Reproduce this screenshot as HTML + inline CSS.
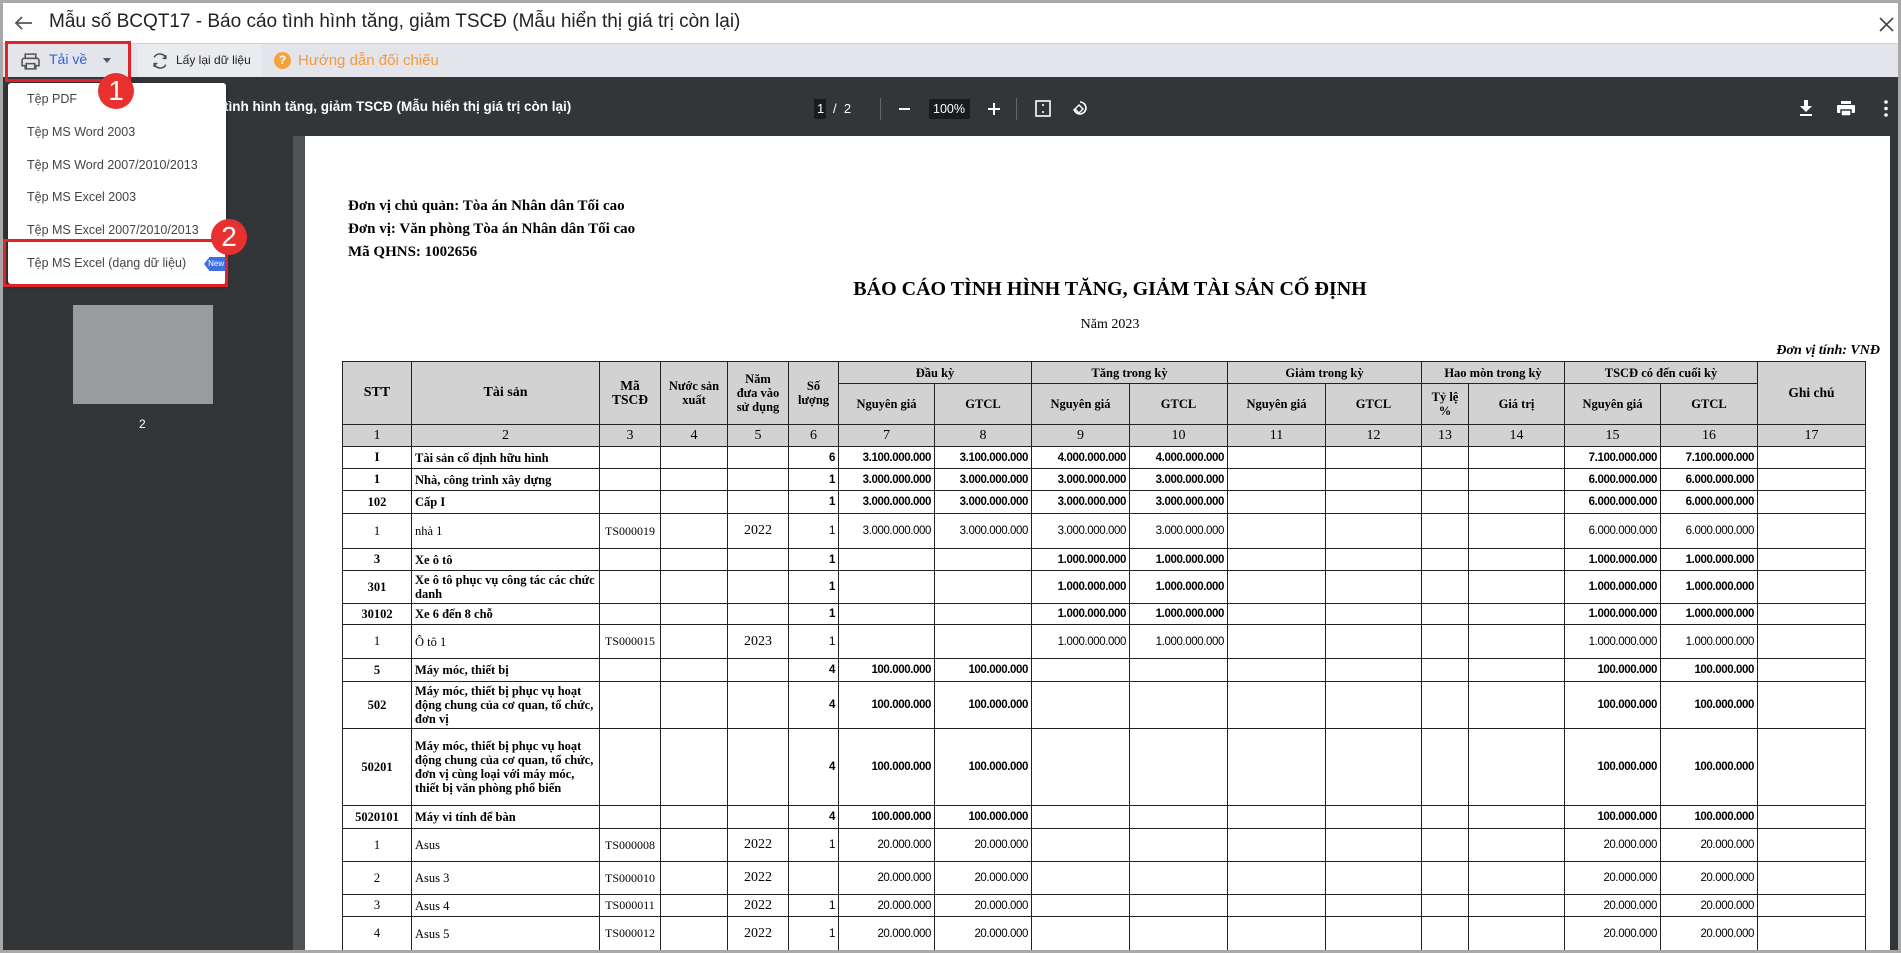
<!DOCTYPE html>
<html><head><meta charset="utf-8">
<style>
*{margin:0;padding:0;box-sizing:border-box}
body{width:1901px;height:953px;overflow:hidden;background:#a8a8a8;font-family:"Liberation Sans",sans-serif;position:relative}
.win{position:absolute;left:3px;top:3px;width:1895px;height:947px;background:#fff;overflow:hidden}
.title{position:absolute;left:0;top:0;width:100%;height:41px;background:#fff;border-bottom:1px solid #d4d4d8}
.title .t{position:absolute;left:46px;top:8px;font-size:19px;color:#222}
.tb{position:absolute;left:0;top:41px;width:100%;height:33px;background:#e4e5ea}
.dark{position:absolute;left:0;top:74px;width:100%;height:873px;background:#323639}
.side{position:absolute;left:0;top:133px;width:290px;height:820px;background:#323639}
.sep{position:absolute;left:290px;top:133px;width:12px;height:820px;background:#4f5356}
.page{position:absolute;left:302px;top:133px;width:1585px;height:820px;background:#fff}
.ser{font-family:"Liberation Serif",serif}
table{position:absolute;left:37px;top:225px;border-collapse:collapse;table-layout:fixed;font-family:"Liberation Serif",serif;font-size:12.5px;color:#000}
td,th{border:1px solid #222;padding:0 3px;overflow:hidden}
th{background:#d2d2d2;font-weight:bold;text-align:center;line-height:14px}
.nr td{background:#d2d2d2;text-align:center;font-size:14px}
.b td{font-weight:bold}
td.c{text-align:center}
td.n{text-align:right;font-family:"Liberation Sans",sans-serif;font-size:11.5px;letter-spacing:-0.4px}
td.l{text-align:left;line-height:14px}
.menu{position:absolute;left:5px;top:80px;width:218px;height:201px;background:#fff;box-shadow:0 2px 6px rgba(0,0,0,.35);border-radius:3px}
.menu div{position:absolute;left:19px;font-size:12.5px;color:#444}
.badge{position:absolute;width:36px;height:36px;border-radius:50%;background:#e8302f;color:#fff;font-size:28px;text-align:center;line-height:36px}
</style></head><body>
<div class="win">
<div class="title">
<svg style="position:absolute;left:12px;top:13px" width="18" height="14" viewBox="0 0 18 14"><path d="M17 7H2M7 1L1 7l6 6" stroke="#555" stroke-width="1.8" fill="none"/></svg>
<div class="t">Mẫu số BCQT17 - Báo cáo tình hình tăng, giảm TSCĐ (Mẫu hiển thị giá trị còn lại)</div>
<svg style="position:absolute;left:1876px;top:14px" width="15" height="15" viewBox="0 0 15 15"><path d="M1 1L14 14M14 1L1 14" stroke="#444" stroke-width="1.6"/></svg>
</div>
<div class="tb">
<svg style="position:absolute;left:18px;top:8px" width="19" height="19" viewBox="0 0 18 18"><path d="M4 6V2h10v4M3 6h12a2 2 0 0 1 2 2v5h-3v3H4v-3H1V8a2 2 0 0 1 2-2zM5 11h8v5H5z" stroke="#555" stroke-width="1.5" fill="none"/></svg>
<div style="position:absolute;left:46px;top:7px;font-size:14px;color:#2e62d9">Tải về</div>
<div style="position:absolute;left:100px;top:14px;border:4px solid transparent;border-top:5px solid #555"></div>
<div style="position:absolute;left:134px;top:0;width:125px;height:33px;background:#eaebef"></div>
<svg style="position:absolute;left:148px;top:8px" width="18" height="18" viewBox="0 0 17 17"><path d="M14 6A6 6 0 0 0 3 5M3 11a6 6 0 0 0 11 1M11 6h3V3M6 11H3v3" stroke="#444" stroke-width="1.4" fill="none"/></svg>
<div style="position:absolute;left:173px;top:9px;font-size:12px;color:#222">Lấy lại dữ liệu</div>
<div style="position:absolute;left:271px;top:8px;width:17px;height:17px;border-radius:50%;background:#f7a13a;color:#fff;font-size:12px;font-weight:bold;text-align:center;line-height:17px">?</div>
<div style="position:absolute;left:295px;top:8px;font-size:15px;color:#f39a3a">Hướng dẫn đối chiếu</div>
</div>
<div class="dark">
<div style="position:absolute;left:221px;top:22px;font-size:13.5px;font-weight:bold;color:#fff">tình hình tăng, giảm TSCĐ (Mẫu hiển thị giá trị còn lại)</div>
<div style="position:absolute;left:811px;top:22px;width:12px;height:20px;background:#191b1c"></div>
<div style="position:absolute;left:814px;top:24px;font-size:13px;color:#fff">1</div>
<div style="position:absolute;left:830px;top:24px;font-size:13px;color:#fff">/ &nbsp;2</div>
<div style="position:absolute;left:877px;top:21px;width:1px;height:22px;background:#666"></div>
<div style="position:absolute;left:896px;top:31px;width:11px;height:2px;background:#fff"></div>
<div style="position:absolute;left:926px;top:22px;height:20px;background:#191b1c;width:41px"></div>
<div style="position:absolute;left:930px;top:25px;font-size:12.5px;color:#fff">100%</div>
<div style="position:absolute;left:985px;top:31px;width:12px;height:2px;background:#fff"></div>
<div style="position:absolute;left:990px;top:26px;width:2px;height:12px;background:#fff"></div>
<div style="position:absolute;left:1013px;top:21px;width:1px;height:22px;background:#666"></div>
<svg style="position:absolute;left:1032px;top:23px" width="16" height="17" viewBox="0 0 16 17"><rect x="1" y="1" width="14" height="15" fill="none" stroke="#fff" stroke-width="1.6"/><path d="M8 4v2M8 11v2" stroke="#fff" stroke-width="1.6"/></svg>
<svg style="position:absolute;left:1068px;top:22px" width="16" height="19" viewBox="0 0 16 19"><path d="M9 3a6 6 0 1 1-6 7" fill="none" stroke="#fff" stroke-width="1.6"/><path d="M8 6l-4 4 4 4 4-4z" fill="none" stroke="#fff" stroke-width="1.4"/></svg>
<svg style="position:absolute;left:1796px;top:23px" width="14" height="17" viewBox="0 0 14 17"><path d="M5 0h4v6h4l-6 6-6-6h4z" fill="#fff"/><rect x="1" y="14" width="12" height="2" fill="#fff"/></svg>
<svg style="position:absolute;left:1834px;top:24px" width="18" height="16" viewBox="0 0 18 16"><rect x="4" y="0" width="10" height="3" fill="#fff"/><rect x="0" y="4" width="18" height="8" rx="1" fill="#fff"/><rect x="4" y="9" width="10" height="6" fill="#fff" stroke="#323639" stroke-width="1.5"/></svg>
<svg style="position:absolute;left:1881px;top:23px" width="4" height="17" viewBox="0 0 4 17"><circle cx="2" cy="2" r="1.8" fill="#fff"/><circle cx="2" cy="8.5" r="1.8" fill="#fff"/><circle cx="2" cy="15" r="1.8" fill="#fff"/></svg>
</div>
<div class="side">
<div style="position:absolute;left:70px;top:169px;width:140px;height:99px;background:#9a9b9d"></div>
<div style="position:absolute;left:136px;top:281px;font-size:12px;color:#fff">2</div>
</div>
<div class="sep"></div>
<div class="page ser">
<div style="position:absolute;left:43px;top:59px;font-size:15px;font-weight:bold;line-height:23px">Đơn vị chủ quản: Tòa án Nhân dân Tối cao<br>Đơn vị: Văn phòng Tòa án Nhân dân Tối cao<br>Mã QHNS: 1002656</div>
<div style="position:absolute;left:0;width:1610px;text-align:center;top:142px;font-size:20px;font-weight:bold">BÁO CÁO TÌNH HÌNH TĂNG, GIẢM TÀI SẢN CỐ ĐỊNH</div>
<div style="position:absolute;left:0;width:1610px;text-align:center;top:181px;font-size:14px">Năm 2023</div>
<div style="position:absolute;right:10px;top:207px;font-size:14px;font-weight:bold;font-style:italic">Đơn vị tính: VNĐ</div>
<table>
<colgroup><col style="width:69px"><col style="width:188px"><col style="width:61px"><col style="width:67px"><col style="width:61px"><col style="width:50px"><col style="width:96px"><col style="width:97px"><col style="width:98px"><col style="width:98px"><col style="width:98px"><col style="width:96px"><col style="width:47px"><col style="width:96px"><col style="width:96px"><col style="width:97px"><col style="width:108px"></colgroup>
<tr style="height:22px"><th rowspan="2" style="font-size:14px">STT</th><th rowspan="2" style="font-size:14px">Tài sản</th><th rowspan="2" style="font-size:13.5px">Mã<br>TSCĐ</th><th rowspan="2">Nước sản<br>xuất</th><th rowspan="2">Năm<br>đưa vào<br>sử dụng</th><th rowspan="2">Số<br>lượng</th><th colspan="2">Đầu kỳ</th><th colspan="2">Tăng trong kỳ</th><th colspan="2">Giảm trong kỳ</th><th colspan="2">Hao mòn trong kỳ</th><th colspan="2">TSCĐ có đến cuối kỳ</th><th rowspan="2" style="font-size:13.5px">Ghi chú</th></tr>
<tr style="height:41px"><th>Nguyên giá</th><th>GTCL</th><th>Nguyên giá</th><th>GTCL</th><th>Nguyên giá</th><th>GTCL</th><th>Tỷ lệ<br>%</th><th>Giá trị</th><th>Nguyên giá</th><th>GTCL</th></tr>
<tr class="nr" style="height:22px"><td>1</td><td>2</td><td>3</td><td>4</td><td>5</td><td>6</td><td>7</td><td>8</td><td>9</td><td>10</td><td>11</td><td>12</td><td>13</td><td>14</td><td>15</td><td>16</td><td>17</td></tr>
<tr class="b" style="height:22px"><td class="c">I</td><td class="l">Tài sản cố định hữu hình</td><td></td><td></td><td></td><td class="n">6</td><td class="n">3.100.000.000</td><td class="n">3.100.000.000</td><td class="n">4.000.000.000</td><td class="n">4.000.000.000</td><td></td><td></td><td></td><td></td><td class="n">7.100.000.000</td><td class="n">7.100.000.000</td><td></td></tr>
<tr class="b" style="height:22px"><td class="c">1</td><td class="l">Nhà, công trình xây dựng</td><td></td><td></td><td></td><td class="n">1</td><td class="n">3.000.000.000</td><td class="n">3.000.000.000</td><td class="n">3.000.000.000</td><td class="n">3.000.000.000</td><td></td><td></td><td></td><td></td><td class="n">6.000.000.000</td><td class="n">6.000.000.000</td><td></td></tr>
<tr class="b" style="height:23px"><td class="c">102</td><td class="l">Cấp I</td><td></td><td></td><td></td><td class="n">1</td><td class="n">3.000.000.000</td><td class="n">3.000.000.000</td><td class="n">3.000.000.000</td><td class="n">3.000.000.000</td><td></td><td></td><td></td><td></td><td class="n">6.000.000.000</td><td class="n">6.000.000.000</td><td></td></tr>
<tr style="height:35px"><td class="c">1</td><td class="l">nhà 1</td><td class="c" style="font-size:12px">TS000019</td><td></td><td class="c" style="font-size:14px">2022</td><td class="n">1</td><td class="n">3.000.000.000</td><td class="n">3.000.000.000</td><td class="n">3.000.000.000</td><td class="n">3.000.000.000</td><td></td><td></td><td></td><td></td><td class="n">6.000.000.000</td><td class="n">6.000.000.000</td><td></td></tr>
<tr class="b" style="height:22px"><td class="c">3</td><td class="l">Xe ô tô</td><td></td><td></td><td></td><td class="n">1</td><td></td><td></td><td class="n">1.000.000.000</td><td class="n">1.000.000.000</td><td></td><td></td><td></td><td></td><td class="n">1.000.000.000</td><td class="n">1.000.000.000</td><td></td></tr>
<tr class="b" style="height:33px"><td class="c">301</td><td class="l">Xe ô tô phục vụ công tác các chức danh</td><td></td><td></td><td></td><td class="n">1</td><td></td><td></td><td class="n">1.000.000.000</td><td class="n">1.000.000.000</td><td></td><td></td><td></td><td></td><td class="n">1.000.000.000</td><td class="n">1.000.000.000</td><td></td></tr>
<tr class="b" style="height:21px"><td class="c">30102</td><td class="l">Xe 6 đến 8 chỗ</td><td></td><td></td><td></td><td class="n">1</td><td></td><td></td><td class="n">1.000.000.000</td><td class="n">1.000.000.000</td><td></td><td></td><td></td><td></td><td class="n">1.000.000.000</td><td class="n">1.000.000.000</td><td></td></tr>
<tr style="height:34px"><td class="c">1</td><td class="l">Ô tô 1</td><td class="c" style="font-size:12px">TS000015</td><td></td><td class="c" style="font-size:14px">2023</td><td class="n">1</td><td></td><td></td><td class="n">1.000.000.000</td><td class="n">1.000.000.000</td><td></td><td></td><td></td><td></td><td class="n">1.000.000.000</td><td class="n">1.000.000.000</td><td></td></tr>
<tr class="b" style="height:23px"><td class="c">5</td><td class="l">Máy móc, thiết bị</td><td></td><td></td><td></td><td class="n">4</td><td class="n">100.000.000</td><td class="n">100.000.000</td><td></td><td></td><td></td><td></td><td></td><td></td><td class="n">100.000.000</td><td class="n">100.000.000</td><td></td></tr>
<tr class="b" style="height:47px"><td class="c">502</td><td class="l">Máy móc, thiết bị phục vụ hoạt động chung của cơ quan, tổ chức, đơn vị</td><td></td><td></td><td></td><td class="n">4</td><td class="n">100.000.000</td><td class="n">100.000.000</td><td></td><td></td><td></td><td></td><td></td><td></td><td class="n">100.000.000</td><td class="n">100.000.000</td><td></td></tr>
<tr class="b" style="height:77px"><td class="c">50201</td><td class="l">Máy móc, thiết bị phục vụ hoạt động chung của cơ quan, tổ chức, đơn vị cùng loại với máy móc, thiết bị văn phòng phổ biến</td><td></td><td></td><td></td><td class="n">4</td><td class="n">100.000.000</td><td class="n">100.000.000</td><td></td><td></td><td></td><td></td><td></td><td></td><td class="n">100.000.000</td><td class="n">100.000.000</td><td></td></tr>
<tr class="b" style="height:23px"><td class="c">5020101</td><td class="l">Máy vi tính để bàn</td><td></td><td></td><td></td><td class="n">4</td><td class="n">100.000.000</td><td class="n">100.000.000</td><td></td><td></td><td></td><td></td><td></td><td></td><td class="n">100.000.000</td><td class="n">100.000.000</td><td></td></tr>
<tr style="height:33px"><td class="c">1</td><td class="l">Asus</td><td class="c" style="font-size:12px">TS000008</td><td></td><td class="c" style="font-size:14px">2022</td><td class="n">1</td><td class="n">20.000.000</td><td class="n">20.000.000</td><td></td><td></td><td></td><td></td><td></td><td></td><td class="n">20.000.000</td><td class="n">20.000.000</td><td></td></tr>
<tr style="height:33px"><td class="c">2</td><td class="l">Asus 3</td><td class="c" style="font-size:12px">TS000010</td><td></td><td class="c" style="font-size:14px">2022</td><td class="n"></td><td class="n">20.000.000</td><td class="n">20.000.000</td><td></td><td></td><td></td><td></td><td></td><td></td><td class="n">20.000.000</td><td class="n">20.000.000</td><td></td></tr>
<tr style="height:22px"><td class="c">3</td><td class="l">Asus 4</td><td class="c" style="font-size:12px">TS000011</td><td></td><td class="c" style="font-size:14px">2022</td><td class="n">1</td><td class="n">20.000.000</td><td class="n">20.000.000</td><td></td><td></td><td></td><td></td><td></td><td></td><td class="n">20.000.000</td><td class="n">20.000.000</td><td></td></tr>
<tr style="height:34px"><td class="c">4</td><td class="l">Asus 5</td><td class="c" style="font-size:12px">TS000012</td><td></td><td class="c" style="font-size:14px">2022</td><td class="n">1</td><td class="n">20.000.000</td><td class="n">20.000.000</td><td></td><td></td><td></td><td></td><td></td><td></td><td class="n">20.000.000</td><td class="n">20.000.000</td><td></td></tr>
</table>
</div>
<div class="menu">
<div style="top:9px">Tệp PDF</div>
<div style="top:42px">Tệp MS Word 2003</div>
<div style="top:75px">Tệp MS Word 2007/2010/2013</div>
<div style="top:107px">Tệp MS Excel 2003</div>
<div style="top:140px">Tệp MS Excel 2007/2010/2013</div>
<div style="top:173px">Tệp MS Excel (dạng dữ liệu)</div>
<span style="position:absolute;left:196px;top:174px;width:22px;height:14px;background:#3b6fe6;color:#fff;font-size:8px;line-height:14px;text-align:center;clip-path:polygon(25% 0,100% 0,100% 100%,25% 100%,0 50%)">&nbsp;New</span>
</div>
<div style="position:absolute;left:2px;top:38px;width:126px;height:41px;border:3px solid #e0232a"></div>
<div style="position:absolute;left:0;top:236px;width:225px;height:48px;border:3px solid #e0232a"></div>
<div class="badge" style="left:95px;top:70px">1</div>
<div class="badge" style="left:208px;top:216px">2</div>
</div>
</body></html>
